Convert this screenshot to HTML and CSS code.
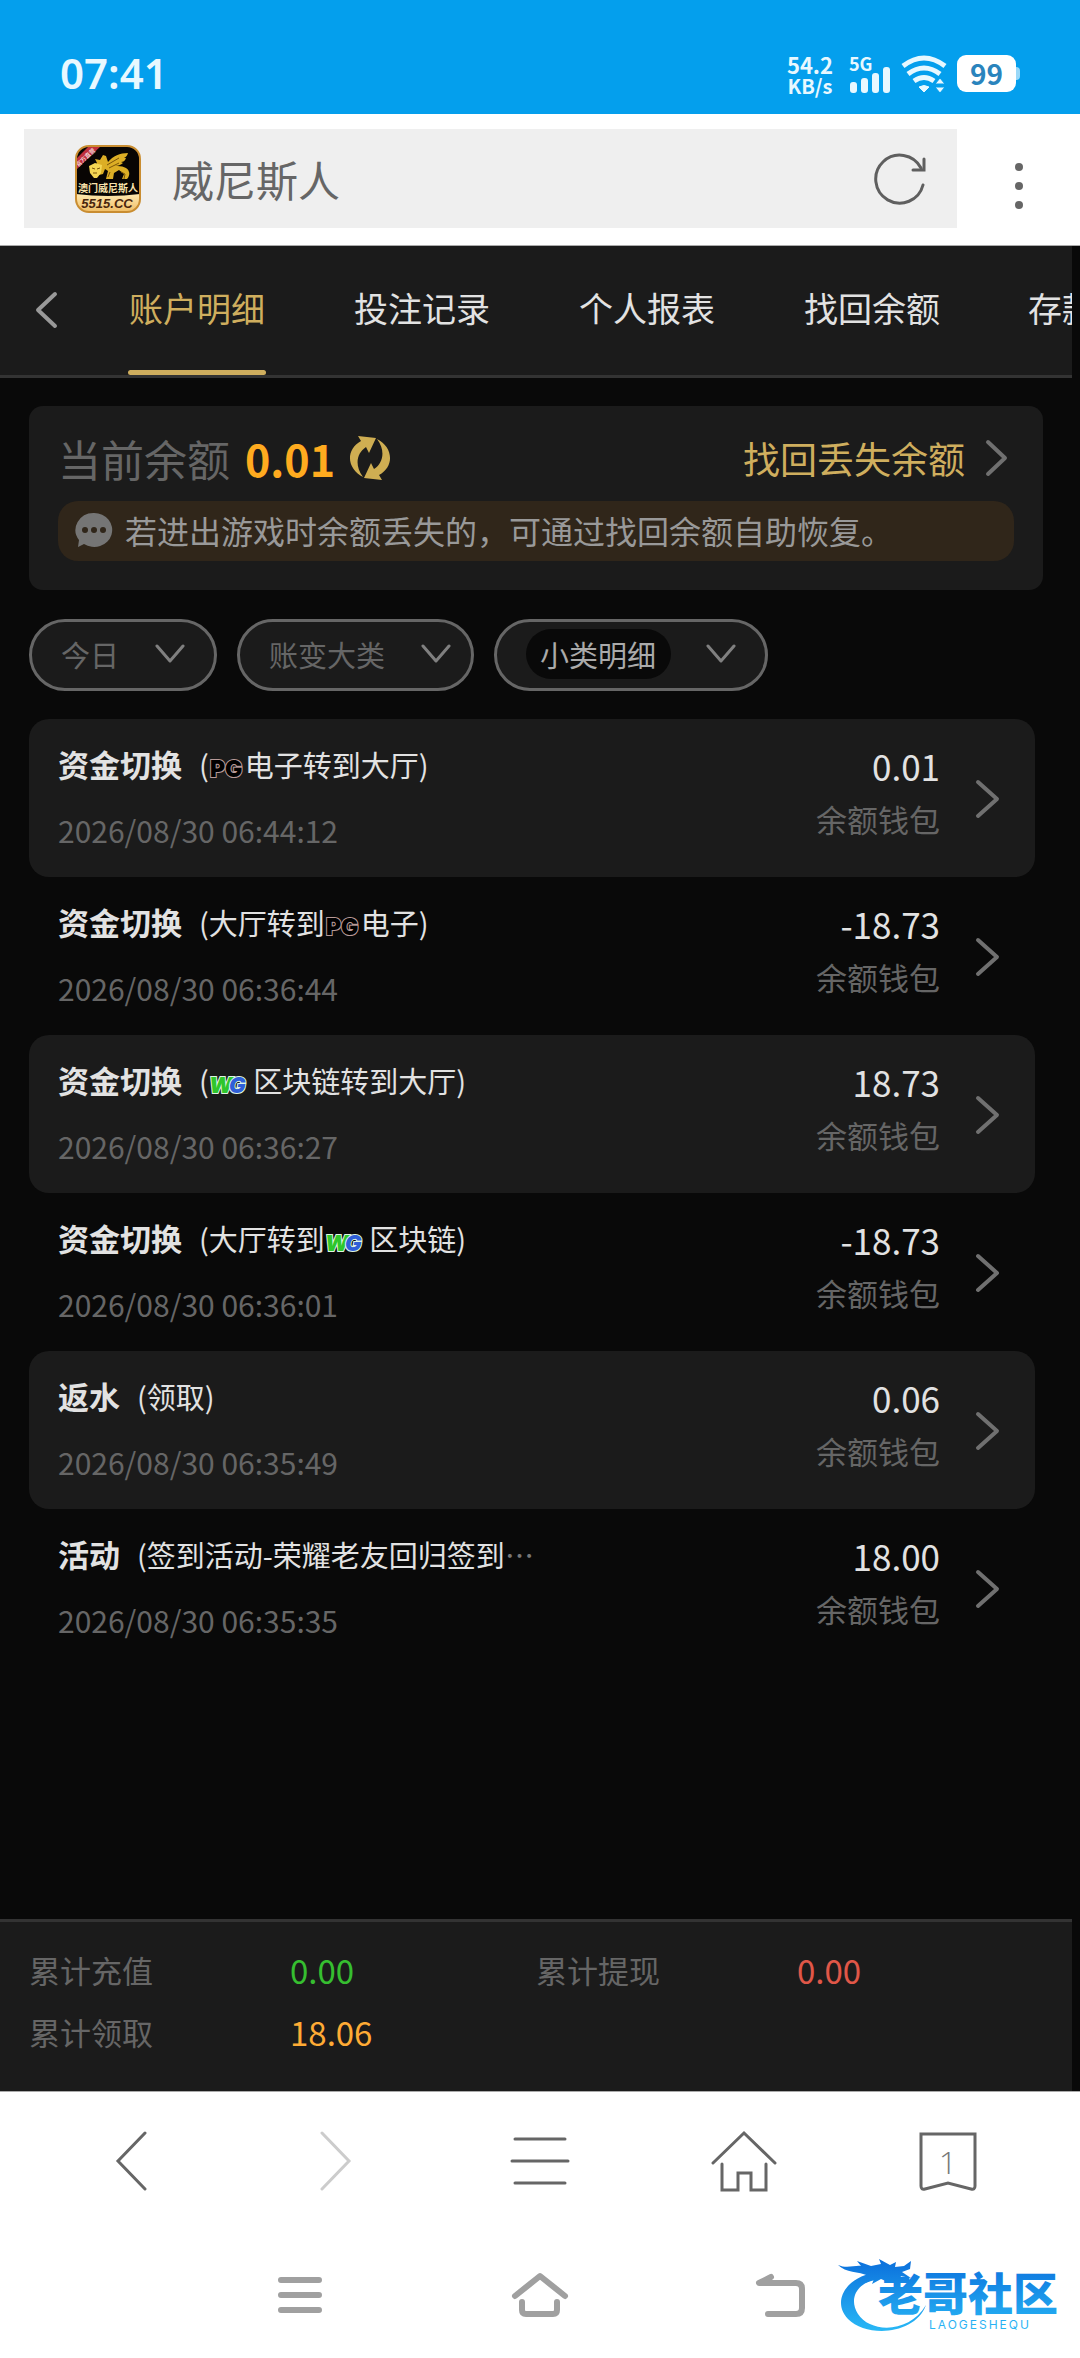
FILE: index.html
```html
<!DOCTYPE html>
<html lang="zh-CN">
<head>
    <meta charset="UTF-8">
    <meta name="viewport" content="width=device-width, initial-scale=1">
    <title>威尼斯人</title>
    <link rel="stylesheet" href="styles.css">
</head>
<body>
    <div class="status-bar">
        <span class="clock">07:41</span>
        <div class="status-icons">
            <div class="net-speed"><span>54.2</span><span>KB/s</span></div>
            <div class="signal">
                <span class="signal-type">5G</span>
                <svg width="42" height="26" viewBox="0 0 42 26" fill="#e8f8ff">
                    <rect x="1" y="15" width="7" height="11" rx="3"/>
                    <rect x="12" y="11" width="7" height="15" rx="3"/>
                    <rect x="23" y="6" width="7" height="20" rx="3"/>
                    <rect x="34" y="0" width="7" height="26" rx="3"/>
                </svg>
            </div>
            <svg class="wifi" width="46" height="38" viewBox="0 0 46 38" fill="none" stroke="#e8f8ff" stroke-width="5">
                <path d="M2 11Q23 -5 44 11"/>
                <path d="M7 19Q23 7 39 19"/>
                <path d="M13 26Q23 19 33 26"/>
                <path d="M18 32Q23 29 28 32L23 37Z" fill="#e8f8ff" stroke-width="1"/>
                <path d="M34 29h10l-5-6zM34 32h10l-5 6z" fill="#e8f8ff" stroke="#049fed" stroke-width="1"/>
            </svg>
            <div class="battery">99</div>
        </div>
    </div>

    <div class="browser-bar">
        <div class="address">
            <svg width="66" height="68" viewBox="0 0 66 68">
                <defs>
                    <linearGradient id="plate" x1="0" y1="0" x2="0" y2="1">
                        <stop offset="0" stop-color="#ffe9b0"/>
                        <stop offset="1" stop-color="#efbb62"/>
                    </linearGradient>
                    <clipPath id="appClip"><rect x="1" y="1" width="64" height="66" rx="13"/></clipPath>
                </defs>
                <g clip-path="url(#appClip)">
                    <rect width="66" height="68" fill="#080503"/>
                    <path d="M0 49Q33 53 66 49V68H0Z" fill="url(#plate)"/>
                    <path d="M25 15l3-5 3 1 2 6c5-6 12-9 20-9-1 3-2 4-4 5l2 0c-1 3-3 4-5 4l2 1c-2 2-5 3-8 3 7 0 13 1 14 6 1 3-1 6-2 7l-5 0 2-5-5-4-5 3-1 6h-7l2-8-3-2-2 5-4 1-3-4-4 2-2-5 5-2 2-3-2-4z" fill="#dcae25"/>
                    <path d="M14 21l6-3 7 2-1 8-4 5h-3l-4-5z" fill="#f4d653"/>
                    <path d="M17 23l3 1M22 24l3-1M18 28h4M32 20l12-7M34 23l10-5M35 27l-2 5M46 27l4 2-1 5" stroke="#7b5409" stroke-width="1" fill="none"/>
                    <path d="M0 26V15L15 0H27Z" fill="#c02f3c"/>
                    <text class="icon-ribbon" x="12" y="14" transform="rotate(-43 12 14)">官方直营</text>
                    <text class="icon-name" x="33" y="47">澳门威尼斯人</text>
                    <text class="icon-domain" x="32" y="63">5515.CC</text>
                </g>
                <rect x="1" y="1" width="64" height="66" rx="13" fill="none" stroke="#c98d31" stroke-width="2"/>
            </svg>
            <input class="address-input" type="text" value="威尼斯人" aria-label="地址栏">
            <button class="icon-btn" type="button" aria-label="刷新">
                <svg width="54" height="54" viewBox="0 0 54 54" fill="none" stroke="#5f5f5f" stroke-width="3" stroke-linecap="round">
                    <path d="M49 33A24 24 0 1 1 47 16"/>
                    <path d="M50 7V18H39"/>
                </svg>
            </button>
        </div>
        <button class="icon-btn more" type="button" aria-label="更多">
            <svg width="10" height="50" viewBox="0 0 10 50" fill="#666">
                <circle cx="5" cy="6" r="4"/>
                <circle cx="5" cy="25" r="4"/>
                <circle cx="5" cy="44" r="4"/>
            </svg>
        </button>
    </div>

    <main class="page">
        <nav class="tabs">
            <button class="icon-btn back" type="button" aria-label="返回">
                <svg width="24" height="38" viewBox="0 0 24 38" fill="none" stroke="#999" stroke-width="4" stroke-linecap="round" stroke-linejoin="round">
                    <path d="M21 3L4 19L21 35"/>
                </svg>
            </button>
            <a href="#" class="tab active">账户明细</a>
            <a href="#" class="tab">投注记录</a>
            <a href="#" class="tab">个人报表</a>
            <a href="#" class="tab">找回余额</a>
            <a href="#" class="tab">存款</a>
        </nav>

        <section class="balance-card">
            <div class="balance-row">
                <span class="balance-label">当前余额</span>
                <span class="balance-value">0.01</span>
                <button class="icon-btn refresh" type="button" aria-label="刷新余额">
                    <svg width="44" height="46" viewBox="0 0 44 46" fill="#cfae52">
                        <path d="M10 1L28 3L21 18L18 12C9 18 6 30 15 42C-1 34 -3 15 13 6Z"/>
                        <path d="M34 45L16 43L23 28L26 34C35 28 38 16 29 4C45 12 47 31 31 40Z"/>
                    </svg>
                </button>
                <a href="#" class="recover">
                    找回丢失余额
                    <svg width="24" height="38" viewBox="0 0 24 38" fill="none" stroke="#707070" stroke-width="4" stroke-linecap="round" stroke-linejoin="round">
                        <path d="M3 3L20 19L3 35"/>
                    </svg>
                </a>
            </div>
            <p class="notice">
                <svg width="38" height="36" viewBox="0 0 38 36">
                    <path d="M19 1a18 17 0 1 1-10 31L3 35l1-7A18 17 0 0 1 19 1z" fill="#757575"/>
                    <g fill="#30261a"><circle cx="10" cy="18" r="3"/><circle cx="19" cy="18" r="3"/><circle cx="28" cy="18" r="3"/></g>
                </svg>
                若进出游戏时余额丢失的，可通过找回余额自助恢复。
            </p>
        </section>

        <div class="filters">
            <div class="filter">
                <select aria-label="日期"><option>今日</option></select>
                <svg width="30" height="20" viewBox="0 0 30 20"><path d="M2 2L15 17L28 2"/></svg>
            </div>
            <div class="filter filter-main">
                <select aria-label="大类"><option>账变大类</option></select>
                <svg width="30" height="20" viewBox="0 0 30 20"><path d="M2 2L15 17L28 2"/></svg>
            </div>
            <div class="filter filter-sub">
                <select aria-label="小类"><option>小类明细</option></select>
                <svg width="30" height="20" viewBox="0 0 30 20"><path d="M2 2L15 17L28 2"/></svg>
            </div>
        </div>

        <div class="records">
            <a href="#" class="record">
                <div class="record-info">
                    <div class="record-title"><b>资金切换</b><span>(<svg class="brand" width="36" height="22" viewBox="0 0 36 22"><text class="pg" x="1" y="19">PG</text></svg>电子转到大厅)</span></div>
                    <time>2026/08/30 06:44:12</time>
                </div>
                <div class="record-amount"><span>0.01</span><small>余额钱包</small></div>
                <svg class="arrow" width="26" height="40" viewBox="0 0 26 40"><path d="M3 3L22 20L3 37"/></svg>
            </a>
            <a href="#" class="record">
                <div class="record-info">
                    <div class="record-title"><b>资金切换</b><span>(大厅转到<svg class="brand" width="36" height="22" viewBox="0 0 36 22"><text class="pg" x="1" y="19">PG</text></svg>电子)</span></div>
                    <time>2026/08/30 06:36:44</time>
                </div>
                <div class="record-amount"><span>-18.73</span><small>余额钱包</small></div>
                <svg class="arrow" width="26" height="40" viewBox="0 0 26 40"><path d="M3 3L22 20L3 37"/></svg>
            </a>
            <a href="#" class="record">
                <div class="record-info">
                    <div class="record-title"><b>资金切换</b><span>(<svg class="brand" width="38" height="22" viewBox="0 0 38 22"><text class="wg" x="0" y="19"><tspan fill="#2fc62c">W</tspan><tspan class="g" x="20">G</tspan></text></svg> 区块链转到大厅)</span></div>
                    <time>2026/08/30 06:36:27</time>
                </div>
                <div class="record-amount"><span>18.73</span><small>余额钱包</small></div>
                <svg class="arrow" width="26" height="40" viewBox="0 0 26 40"><path d="M3 3L22 20L3 37"/></svg>
            </a>
            <a href="#" class="record">
                <div class="record-info">
                    <div class="record-title"><b>资金切换</b><span>(大厅转到<svg class="brand" width="38" height="22" viewBox="0 0 38 22"><text class="wg" x="0" y="19"><tspan fill="#2fc62c">W</tspan><tspan class="g" x="20">G</tspan></text></svg> 区块链)</span></div>
                    <time>2026/08/30 06:36:01</time>
                </div>
                <div class="record-amount"><span>-18.73</span><small>余额钱包</small></div>
                <svg class="arrow" width="26" height="40" viewBox="0 0 26 40"><path d="M3 3L22 20L3 37"/></svg>
            </a>
            <a href="#" class="record">
                <div class="record-info">
                    <div class="record-title"><b>返水</b><span>(领取)</span></div>
                    <time>2026/08/30 06:35:49</time>
                </div>
                <div class="record-amount"><span>0.06</span><small>余额钱包</small></div>
                <svg class="arrow" width="26" height="40" viewBox="0 0 26 40"><path d="M3 3L22 20L3 37"/></svg>
            </a>
            <a href="#" class="record">
                <div class="record-info">
                    <div class="record-title"><b>活动</b><span>(签到活动-荣耀老友回归签到<i>…</i></span></div>
                    <time>2026/08/30 06:35:35</time>
                </div>
                <div class="record-amount"><span>18.00</span><small>余额钱包</small></div>
                <svg class="arrow" width="26" height="40" viewBox="0 0 26 40"><path d="M3 3L22 20L3 37"/></svg>
            </a>
        </div>

        <dl class="totals">
            <div><dt>累计充值</dt><dd class="green">0.00</dd></div>
            <div><dt>累计提现</dt><dd class="red">0.00</dd></div>
            <div><dt>累计领取</dt><dd class="orange">18.06</dd></div>
        </dl>
    </main>

    <nav class="toolbar">
        <button class="icon-btn" type="button" aria-label="后退">
            <svg width="60" height="60" viewBox="0 0 60 60"><path d="M43 2L16 30L43 58"/></svg>
        </button>
        <button class="icon-btn disabled" type="button" aria-label="前进">
            <svg width="60" height="60" viewBox="0 0 60 60"><path d="M16 2L43 30L16 58"/></svg>
        </button>
        <button class="icon-btn" type="button" aria-label="菜单">
            <svg width="60" height="60" viewBox="0 0 60 60"><path d="M5 8H55M2 30H58M5 52H55"/></svg>
        </button>
        <button class="icon-btn" type="button" aria-label="主页">
            <svg width="66" height="62" viewBox="0 0 66 62"><path d="M2 33L33 3L64 33M11 34V60H27V43H40V60H55V34"/></svg>
        </button>
        <button class="icon-btn" type="button" aria-label="标签页">
            <svg width="60" height="60" viewBox="0 0 60 60">
                <path d="M3 3H57V55Q57 59 53 58L30 52L7 58Q3 59 3 55Z"/>
                <text x="30" y="43">1</text>
            </svg>
        </button>
    </nav>

    <nav class="system-nav">
        <button class="icon-btn" type="button" aria-label="最近任务">
            <svg width="48" height="44" viewBox="0 0 48 44"><path d="M5 7H43M5 22H43M5 37H43"/></svg>
        </button>
        <button class="icon-btn" type="button" aria-label="桌面">
            <svg width="58" height="46" viewBox="0 0 58 46"><path d="M4 24L29 4L54 24M11 30V38Q11 42 15 42H42Q46 42 46 38V30"/></svg>
        </button>
        <button class="icon-btn" type="button" aria-label="返回上一级">
            <svg width="52" height="46" viewBox="0 0 52 46"><path d="M17 5L5 11H42Q48 11 48 17V36Q48 42 42 42H14"/></svg>
        </button>

        <svg class="watermark" width="230" height="84" viewBox="0 0 230 84">
            <defs>
                <linearGradient id="blue" gradientUnits="userSpaceOnUse" x1="0" y1="5" x2="0" y2="78">
                    <stop offset="0" stop-color="#0b6fdc"/>
                    <stop offset="1" stop-color="#29b9f6"/>
                </linearGradient>
            </defs>
            <g fill="url(#blue)">
                <path d="M36 19C9 23-7 47 10 65C29 84 77 81 88 51C71 80 32 79 20 60C9 43 22 26 41 26Z"/>
                <path d="M0 11C9 15 17 11 23 12L19 7L33 12L43 10L41 5L52 11L58 8L57 13L66 12L73 7L72 15L64 18L73 24L62 22L70 29L55 24L50 28L43 25L34 30L36 25L27 29L31 22C20 17 8 19 0 11Z"/>
                <text class="mark-name" x="40" y="57">老哥社区</text>
                <text class="mark-latin" x="91" y="75">LAOGESHEQU</text>
            </g>
        </svg>
    </nav>
</body>
</html>
```

FILE: styles.css
```css
* {
    box-sizing: border-box;
}

body {
    display: flex;
    flex-direction: column;
    min-height: 100vh;
    margin: 0;
    background: #fff;
    font-family: "Noto Sans CJK SC", "Noto Sans", sans-serif;
}

a {
    color: inherit;
    text-decoration: none;
}

svg {
    display: block;
    flex: none;
}

.icon-btn {
    display: flex;
    align-items: center;
    justify-content: center;
    padding: 0;
    border: 0;
    background: none;
}

/* status bar */
.status-bar {
    display: flex;
    justify-content: space-between;
    height: 114px;
    padding: 49px 64px 0 60px;
    background: #049fed;
    color: #e8f8ff;
    font-weight: bold;
}

.clock {
    font-family: "Noto Sans", sans-serif;
    font-size: 42px;
    font-weight: 600;
    line-height: 48px;
}

.status-icons {
    display: flex;
    align-items: flex-start;
    gap: 10px;
    padding-top: 4px;
}

.net-speed {
    display: flex;
    flex-direction: column;
    align-items: center;
    margin-right: 6px;
    font-size: 22px;
    line-height: 22px;
}

.net-speed span + span {
    font-size: 20px;
}

.signal {
    display: flex;
    flex-direction: column;
}

.signal-type {
    height: 14px;
    font-size: 18px;
    line-height: 20px;
}

.wifi {
    margin-top: 2px;
}

.battery {
    position: relative;
    width: 59px;
    height: 37px;
    margin-top: 2px;
    border-radius: 9px;
    background: #fff;
    color: #2a84bd;
    font-size: 28px;
    line-height: 36px;
    text-align: center;
}

.battery::after {
    content: "";
    position: absolute;
    top: 12px;
    right: -4px;
    width: 4px;
    height: 13px;
    border-radius: 0 4px 4px 0;
    background: #9ad8f8;
}

/* browser header */
.browser-bar {
    display: flex;
    height: 132px;
    padding: 15px 0 17px 24px;
    border-bottom: 1px solid #aaa;
}

.address {
    display: flex;
    flex: 1;
    align-items: center;
    min-width: 0;
    padding: 0 29px 0 51px;
    background: #efefef;
}

.address-input {
    flex: 1;
    min-width: 0;
    padding: 0 0 0 31px;
    border: 0;
    background: none;
    color: #666;
    font-family: inherit;
    font-size: 42px;
    line-height: 60px;
}

.more {
    width: 123px;
    padding-top: 14px;
}

/* page */
.page {
    display: flex;
    flex: 1;
    flex-direction: column;
    padding-right: 8px;
    background: #090909;
    color: #e2e2e2;
}

.tabs {
    display: flex;
    gap: 87px;
    height: 132px;
    border-bottom: 3px solid #333;
    background: #1b1b1b;
    overflow: hidden;
}

.back {
    width: 60px;
    margin-right: -17px;
    padding: 0 0 2px 34px;
}

.tab {
    flex: none;
    width: 138px;
    font-size: 34px;
    line-height: 124px;
    text-align: center;
    white-space: nowrap;
}

.tab:last-child {
    text-align: left;
}

.tab.active {
    position: relative;
    color: #cfae5e;
}

.tab.active::after {
    content: "";
    position: absolute;
    left: 0;
    right: 0;
    bottom: 0;
    height: 5px;
    border-radius: 3px;
    background: #cfae5e;
}

.balance-card {
    margin: 28px 29px 0;
    padding: 26px 29px 29px;
    border-radius: 14px;
    background: #1b1b1b;
}

.balance-row {
    display: flex;
    align-items: center;
    height: 52px;
    margin-bottom: 17px;
}

.balance-label {
    color: #666;
    font-size: 43px;
}

.balance-value {
    margin: 0 13px 0 15px;
    color: #ffab1f;
    font-size: 43px;
    font-weight: bold;
}

.recover {
    display: flex;
    align-items: center;
    gap: 20px;
    margin-left: auto;
    padding-right: 5px;
    color: #cfae5e;
    font-size: 37px;
}

.notice {
    display: flex;
    align-items: center;
    gap: 12px;
    height: 60px;
    margin: 0;
    padding: 0 16px 3px 17px;
    border-radius: 20px;
    background: #30261a;
    color: #999;
    font-size: 32px;
    white-space: nowrap;
}

.filters {
    display: flex;
    gap: 20px;
    margin: 29px 29px 28px;
}

.filter {
    display: flex;
    align-items: center;
    gap: 35px;
    height: 72px;
    padding: 0 29px 2px;
    border: 3px solid #666;
    border-radius: 36px;
    background: #1b1b1b;
}

.filter-main {
    padding-right: 20px;
}

.filter select {
    appearance: none;
    padding: 0;
    border: 0;
    background: none;
    color: #666;
    font-family: inherit;
    font-size: 29px;
    line-height: 50px;
}

.filter svg {
    fill: none;
    stroke: #808080;
    stroke-width: 3;
    stroke-linecap: round;
    stroke-linejoin: round;
}

.filter-sub select {
    padding: 0 14px;
    border-radius: 25px;
    background: #090909;
    color: #aaa;
}

/* records */
.records {
    flex: 1;
    padding: 0 37px 0 29px;
}

.record {
    display: flex;
    padding: 23px 34px 27px 29px;
    border-radius: 20px;
}

.record:nth-child(odd) {
    background: #1b1b1b;
}

.record-info {
    flex: 1;
    min-width: 0;
}

.record-title {
    display: flex;
    gap: 17px;
    margin-bottom: 24px;
    font-size: 29px;
    line-height: 44px;
    white-space: nowrap;
}

.record-title b {
    font-size: 31px;
}

.record-title i {
    color: #777;
    font-style: normal;
}

.record time {
    display: block;
    color: #666;
    font-size: 30px;
    line-height: 40px;
}

.record-amount {
    display: flex;
    flex-direction: column;
    gap: 11px;
    margin-right: 35px;
    padding-top: 2px;
    font-size: 35px;
    line-height: 44px;
    text-align: right;
}

.record-amount small {
    color: #666;
    font-size: 31px;
    line-height: 40px;
}

.arrow {
    margin-top: 37px;
    fill: none;
    stroke: #707070;
    stroke-width: 4;
    stroke-linecap: round;
    stroke-linejoin: round;
}

.brand {
    display: inline-block;
    overflow: visible;
    vertical-align: -3px;
}

.pg,
.wg {
    font-family: Inter, sans-serif;
    font-size: 22px;
    font-weight: 900;
    paint-order: stroke;
    stroke-width: 2;
}

.pg {
    fill: #000;
    stroke: #b89a98;
    font-size: 23px;
}

.wg {
    stroke: #dff5e4;
    font-style: italic;
}

.wg .g {
    fill: #2f5fd8;
}

.totals {
    display: grid;
    grid-template-columns: 1fr 1fr;
    gap: 22px 0;
    margin: 0;
    padding: 28px 29px 39px;
    border-top: 3px solid #333;
    background: #1b1b1b;
}

.totals div {
    display: flex;
}

.totals dt {
    width: 261px;
    color: #666;
    font-size: 31px;
    line-height: 40px;
}

.totals dd {
    margin: 0;
    font-size: 33px;
    line-height: 40px;
}

.green {
    color: #36be30;
}

.red {
    color: #e05748;
}

.orange {
    color: #ffab35;
}

/* bottom bars */
.toolbar {
    display: flex;
    height: 139px;
    padding: 0 30px;
    border-top: 1px solid #aaa;
}

.toolbar .icon-btn {
    flex: 1;
}

.toolbar svg {
    fill: none;
    stroke: #666;
    stroke-width: 3;
    stroke-linecap: round;
}

.toolbar .disabled svg {
    stroke: #ccc;
}

.toolbar text {
    fill: #777;
    stroke: none;
    font-family: "Open Sans", "Noto Sans", sans-serif;
    font-size: 32px;
    font-weight: 300;
    text-anchor: middle;
}

.system-nav {
    position: relative;
    display: flex;
    height: 128px;
    padding: 2px 180px 0;
}

.system-nav .icon-btn {
    flex: 1;
}

.system-nav .icon-btn svg {
    fill: none;
    stroke: #a0a0a0;
    stroke-width: 6;
    stroke-linecap: round;
    stroke-linejoin: round;
}

.watermark {
    position: absolute;
    right: 12px;
    bottom: 20px;
}

.mark-name {
    font-size: 45px;
    font-weight: 900;
}

.mark-latin {
    font-family: Inter, sans-serif;
    font-size: 12px;
    letter-spacing: 2px;
}

.icon-ribbon {
    fill: #fff;
    font-size: 6px;
    text-anchor: middle;
}

.icon-name {
    fill: #f8e2ab;
    font-size: 10px;
    font-weight: bold;
    text-anchor: middle;
}

.icon-domain {
    fill: #4b260d;
    font-family: "Liberation Sans", sans-serif;
    font-size: 13px;
    font-style: italic;
    font-weight: bold;
    text-anchor: middle;
}
```
